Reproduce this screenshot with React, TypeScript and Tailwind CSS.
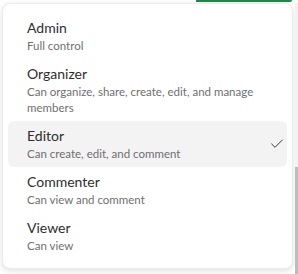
import { Check } from 'lucide-react';

const roles = [
  { name: 'Admin', desc: 'Full control' },
  { name: 'Organizer', desc: 'Can organize, share, create, edit, and manage members' },
  { name: 'Editor', desc: 'Can create, edit, and comment', selected: true },
  { name: 'Commenter', desc: 'Can view and comment' },
  { name: 'Viewer', desc: 'Can view' },
];

export default function App() {
  return (
    <div className="w-[298px] h-[274px] bg-white flex flex-col overflow-hidden font-['Lato',sans-serif]">
      {/* green button edge peeking above the menu */}
      <div className="h-[3px] flex shrink-0">
        <div className="ml-[196px] w-[96px] h-[2px] bg-[#1e8a4c] rounded-br-[3px]" />
      </div>

      <div className="flex flex-1">
        <div className="ml-[2px] w-[291px] h-[266px] bg-white rounded-[8px] border border-[#ececec] shadow-[0_2px_6px_rgba(0,0,0,0.12)] py-[9px] px-[5px] flex flex-col">
          {roles.map((role) => (
            <div
              key={role.name}
              className={`flex items-center pl-[19px] pr-[2px] py-[5px] rounded-[6px] ${
                role.selected ? 'bg-[#f3f3f3]' : ''
              }`}
            >
              <div className="flex-1 flex flex-col">
                <span className="text-[14px] leading-[20px] text-[#2e2e2e]">{role.name}</span>
                <span className="text-[11.5px] leading-[16px] text-[#6f6f6f] pr-[8px]">{role.desc}</span>
              </div>
              {role.selected && (
                <Check className="w-4 h-4 text-[#3a3a3a] shrink-0" strokeWidth={1.5} />
              )}
            </div>
          ))}
        </div>

        {/* page scrollbar behind the menu */}
        <div className="ml-[2px] w-[3px] flex flex-col">
          <div className="h-[164px] bg-[#f2f2f2]" />
          <div className="flex-1 bg-[#bdbdbd]" />
        </div>
      </div>
    </div>
  );
}
